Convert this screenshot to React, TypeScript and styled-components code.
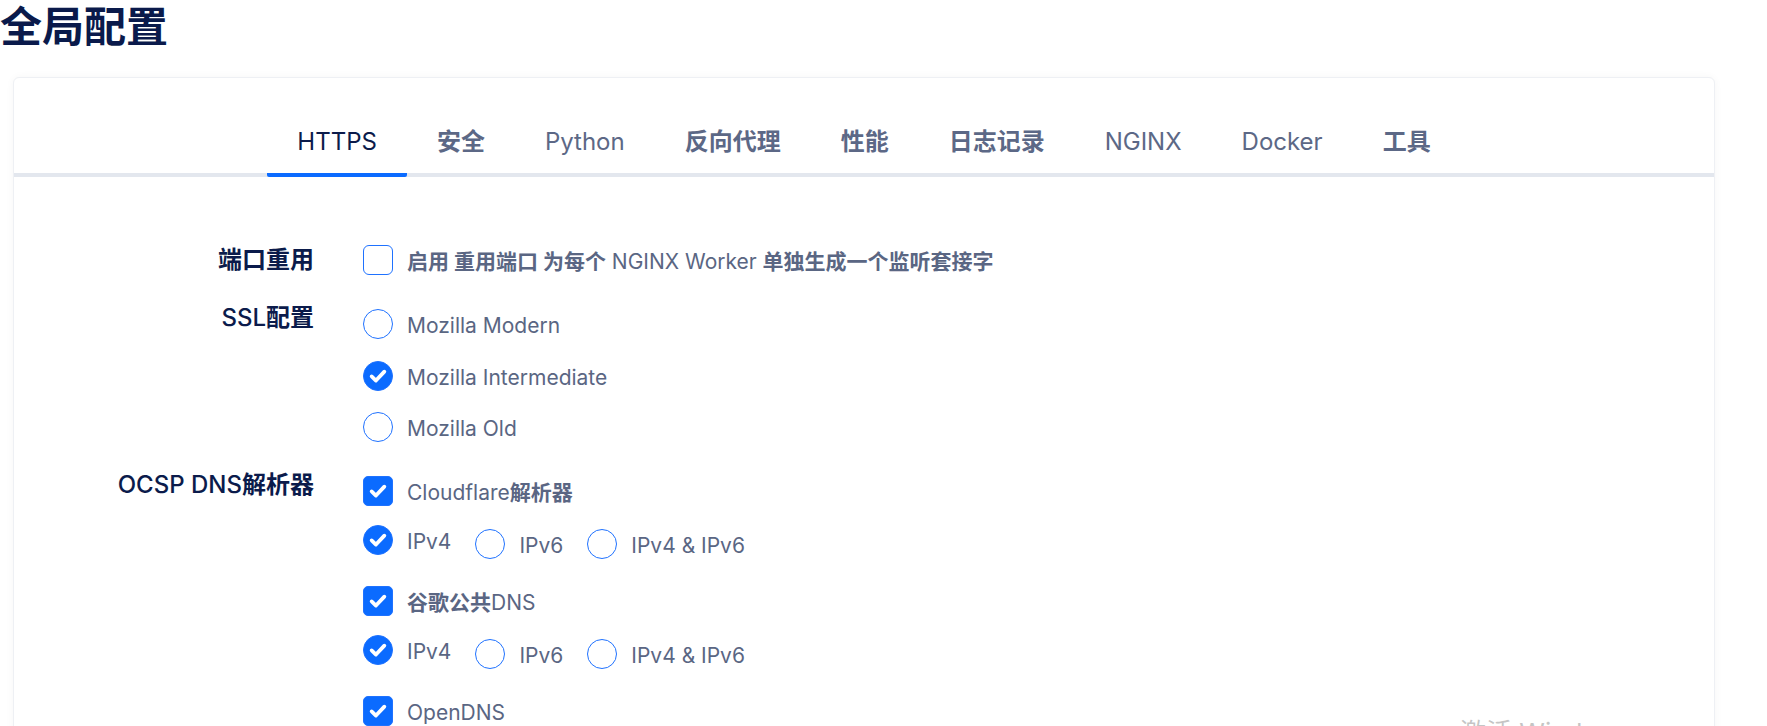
import React from 'react';
import styled, { createGlobalStyle } from 'styled-components';

const GlobalStyle = createGlobalStyle`
  html, body {
    margin: 0;
    padding: 0;
    background: #ffffff;
    overflow: hidden;
  }
  body {
    font-family: "Inter", "Noto Sans CJK SC", sans-serif;
    color: #0b1b4b;
  }
`;

interface TabItem {
  label: string;
  han?: boolean;
}

const tabs: TabItem[] = [
  { label: 'HTTPS' },
  { label: '安全', han: true },
  { label: 'Python' },
  { label: '反向代理', han: true },
  { label: '性能', han: true },
  { label: '日志记录', han: true },
  { label: 'NGINX' },
  { label: 'Docker' },
  { label: '工具', han: true },
];

const CheckMark: React.FC = () => (
  <svg width="30" height="30" viewBox="0 0 30 30" fill="none">
    <path
      d="M8.2 15.4l4.6 4.5 9-9.6"
      stroke="#ffffff"
      strokeWidth="4"
      strokeLinecap="round"
      strokeLinejoin="round"
    />
  </svg>
);

const Check: React.FC<{ checked?: boolean }> = ({ checked }) => (
  <CheckBox $checked={checked}>{checked && <CheckMark />}</CheckBox>
);

const Radio: React.FC<{ checked?: boolean }> = ({ checked }) => (
  <RadioDot $checked={checked}>{checked && <CheckMark />}</RadioDot>
);

const IpChoice: React.FC<{ selected: string }> = ({ selected }) => (
  <InlineRadios>
    {['IPv4', 'IPv6', 'IPv4 & IPv6'].map((v) => (
      <Option key={v} $raised={v === selected} $inline>
        <Radio checked={v === selected} />
        <OptionText>{v}</OptionText>
      </Option>
    ))}
  </InlineRadios>
);

const App: React.FC = () => {
  return (
    <Page>
      <GlobalStyle />
      <Title>全局配置</Title>
      <Card>
        <TabBar>
          {tabs.map((t, i) => (
            <Tab key={t.label} $active={i === 0} $han={t.han}>
              {t.label}
            </Tab>
          ))}
        </TabBar>

        <Form>
          <FieldLabel><Han>端口重用</Han></FieldLabel>
          <Controls $pt={0}>
            <Option>
              <Check />
              <OptionText>
                <Han>启用 重用端口 为每个</Han> NGINX Worker <Han>单独生成一个监听套接字</Han>
              </OptionText>
            </Option>
          </Controls>

          <FieldLabel>SSL<Han>配置</Han></FieldLabel>
          <Controls $pt={6}>
            <OptionList>
              <Option>
                <Radio />
                <OptionText>Mozilla Modern</OptionText>
              </Option>
              <Option>
                <Radio checked />
                <OptionText>Mozilla Intermediate</OptionText>
              </Option>
              <Option>
                <Radio />
                <OptionText>Mozilla Old</OptionText>
              </Option>
            </OptionList>
          </Controls>

          <FieldLabel>OCSP DNS<Han>解析器</Han></FieldLabel>
          <Controls $pt={6}>
            <ResolverBlock>
              <Option>
                <Check checked />
                <OptionText>Cloudflare<Han>解析器</Han></OptionText>
              </Option>
              <IpChoice selected="IPv4" />
            </ResolverBlock>
            <ResolverBlock>
              <Option>
                <Check checked />
                <OptionText><Han>谷歌公共</Han>DNS</OptionText>
              </Option>
              <IpChoice selected="IPv4" />
            </ResolverBlock>
            <ResolverBlock>
              <Option>
                <Check checked />
                <OptionText>OpenDNS</OptionText>
              </Option>
            </ResolverBlock>
          </Controls>
        </Form>
      </Card>
      <Watermark>激活 Windows</Watermark>
    </Page>
  );
};

const Page = styled.div`
  position: relative;
  height: 726px;
  overflow: hidden;
`;

const Title = styled.h1`
  margin: 0;
  padding-top: 6px;
  font-size: 42px;
  line-height: 42px;
  font-weight: 700;
  color: #0a1a4b;
  letter-spacing: 0;
`;

const Card = styled.div`
  margin: 29px 52px 0 13px;
  border: 1px solid #eef0f4;
  border-radius: 6px;
  background: #ffffff;
  box-shadow: 0 0 8px rgba(20, 30, 60, 0.04);
  padding-bottom: 120px;
`;

const TabBar = styled.div`
  display: flex;
  justify-content: center;
  padding-top: 47px;
  border-bottom: 4px solid #e3e7ee;
`;

const Tab = styled.div<{ $active?: boolean; $han?: boolean }>`
  padding: 0 30px 14px;
  margin-bottom: -4px;
  font-size: 24px;
  line-height: 34px;
  font-weight: ${(p) => (p.$han ? 700 : 400)};
  color: ${(p) => (p.$active ? '#0b1b4b' : '#5c6886')};
  border-bottom: 4px solid ${(p) => (p.$active ? '#0b6bff' : 'transparent')};
  border-radius: 0 0 2px 2px;
  white-space: nowrap;
`;

const Form = styled.div`
  display: grid;
  grid-template-columns: 300px 1fr;
  column-gap: 49px;
  row-gap: 22px;
  padding-top: 65px;
  align-items: start;
`;

const FieldLabel = styled.div`
  text-align: right;
  font-size: 24px;
  line-height: 36px;
  font-weight: 500;
  color: #0b1b4b;
  white-space: nowrap;
`;

const Controls = styled.div<{ $pt: number }>`
  padding-top: ${(p) => p.$pt}px;
  display: flex;
  flex-direction: column;
  gap: 21px;
`;

const OptionList = styled.div`
  display: flex;
  flex-direction: column;
  gap: 15.5px;
`;

const ResolverBlock = styled.div`
  display: flex;
  flex-direction: column;
  gap: 13px;
`;

const InlineRadios = styled.div`
  display: flex;
  align-items: flex-start;
`;

const Option = styled.label<{ $raised?: boolean; $inline?: boolean }>`
  display: flex;
  align-items: center;
  gap: 14px;
  height: 36px;
  margin-top: ${(p) => (p.$inline && !p.$raised ? '4px' : '0')};
  margin-right: ${(p) => (p.$inline ? '24px' : '0')};
`;

const boxBase = `
  box-sizing: border-box;
  width: 30px;
  height: 30px;
  flex: none;
  display: flex;
  align-items: center;
  justify-content: center;
`;

const CheckBox = styled.span<{ $checked?: boolean }>`
  ${boxBase}
  border-radius: ${(p) => (p.$checked ? '5px' : '6px')};
  border: 1px solid #1f72ff;
  background: ${(p) => (p.$checked ? '#0b6bff' : '#ffffff')};
`;

const RadioDot = styled.span<{ $checked?: boolean }>`
  ${boxBase}
  border-radius: 50%;
  border: 1px solid #1f72ff;
  background: ${(p) => (p.$checked ? '#0b6bff' : '#ffffff')};
`;

const OptionText = styled.span`
  padding-top: 4px;
  font-size: 21px;
  line-height: 32px;
  font-weight: 400;
  color: #5a6683;
  white-space: nowrap;
`;

const Han = styled.span`
  font-weight: 700;
`;

const Watermark = styled.div`
  position: absolute;
  left: 1460px;
  top: 720px;
  font-size: 26px;
  line-height: 26px;
  color: rgba(140, 140, 140, 0.5);
  white-space: nowrap;
`;

export default App;
